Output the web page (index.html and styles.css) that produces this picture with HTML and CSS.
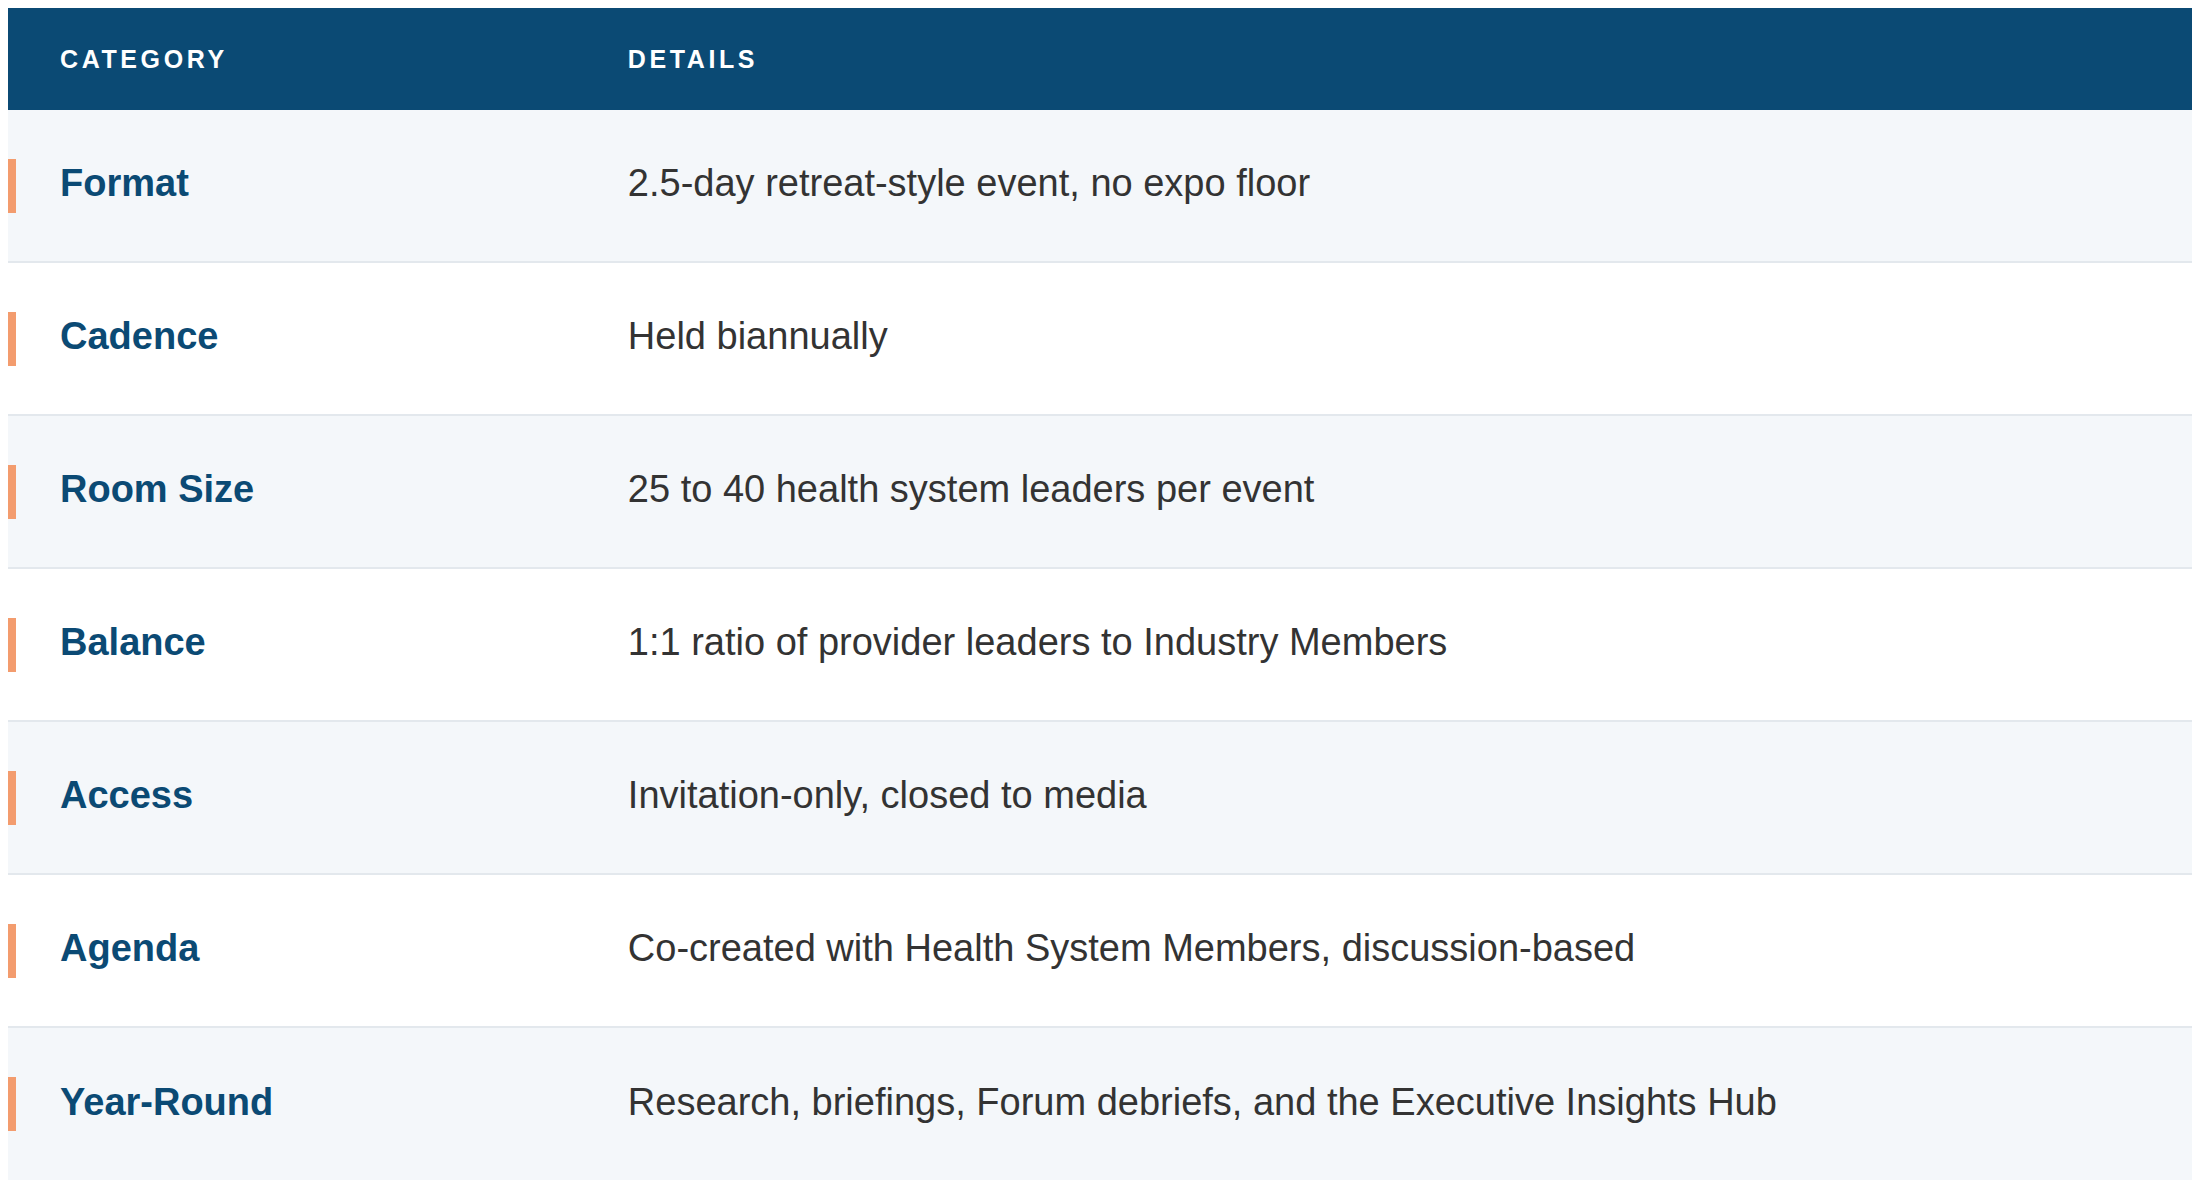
FILE: index.html
```html
<!DOCTYPE html>
<html lang="en">
<head>
<meta charset="utf-8">
<title>Event Details</title>
<link rel="stylesheet" href="styles.css">
</head>
<body>
<div class="table" role="table">
  <div class="head" role="row">
    <div class="hcell cat" role="columnheader">Category</div>
    <div class="hcell" role="columnheader">Details</div>
  </div>
  <div class="row" role="row">
    <div class="cell cat" role="cell"><span class="bar"></span><span class="label">Format</span></div>
    <div class="cell" role="cell"><span class="text">2.5-day retreat-style event, no expo floor</span></div>
  </div>
  <div class="row" role="row">
    <div class="cell cat" role="cell"><span class="bar"></span><span class="label">Cadence</span></div>
    <div class="cell" role="cell"><span class="text">Held biannually</span></div>
  </div>
  <div class="row" role="row">
    <div class="cell cat" role="cell"><span class="bar"></span><span class="label">Room Size</span></div>
    <div class="cell" role="cell"><span class="text">25 to 40 health system leaders per event</span></div>
  </div>
  <div class="row" role="row">
    <div class="cell cat" role="cell"><span class="bar"></span><span class="label">Balance</span></div>
    <div class="cell" role="cell"><span class="text">1:1 ratio of provider leaders to Industry Members</span></div>
  </div>
  <div class="row" role="row">
    <div class="cell cat" role="cell"><span class="bar"></span><span class="label">Access</span></div>
    <div class="cell" role="cell"><span class="text">Invitation-only, closed to media</span></div>
  </div>
  <div class="row" role="row">
    <div class="cell cat" role="cell"><span class="bar"></span><span class="label">Agenda</span></div>
    <div class="cell" role="cell"><span class="text">Co-created with Health System Members, discussion-based</span></div>
  </div>
  <div class="row" role="row">
    <div class="cell cat" role="cell"><span class="bar"></span><span class="label">Year-Round</span></div>
    <div class="cell" role="cell"><span class="text">Research, briefings, Forum debriefs, and the Executive Insights Hub</span></div>
  </div>
</div>
</body>
</html>
```

FILE: styles.css
```css
html, body {
  background: #ffffff;
}
body {
  margin: 8px;
  font-family: "Liberation Sans", Arial, sans-serif;
}
.table {
  display: flex;
  flex-direction: column;
}
.head {
  display: grid;
  grid-template-columns: 26% 1fr;
  height: 102px;
  align-items: center;
  background: #0b4a74;
}
.hcell {
  padding-left: 52px;
  color: #ffffff;
  font-size: 25px;
  font-weight: 700;
  letter-spacing: 3.6px;
  text-transform: uppercase;
  line-height: 1.2;
}
.row {
  display: grid;
  grid-template-columns: 26% 1fr;
  height: 151px;
  align-items: center;
  border-bottom: 2px solid #e3e8ed;
  background: #ffffff;
}
.row:nth-child(even) {
  background: #f4f7fa;
}
.row:last-child {
  border-bottom: 0;
  height: 152px;
}
.cell {
  display: flex;
  align-items: center;
  padding-left: 52px;
  font-size: 38px;
  line-height: 1.5;
  color: #333333;
}
.cell.cat {
  padding-left: 0;
}
.bar {
  flex: none;
  width: 8px;
  height: 54px;
  margin-right: 44px;
  background: #f39c6e;
}
.label {
  color: #0b4a74;
  font-weight: 700;
  margin-bottom: 4px;
}
.text {
  margin-bottom: 4px;
}
```
